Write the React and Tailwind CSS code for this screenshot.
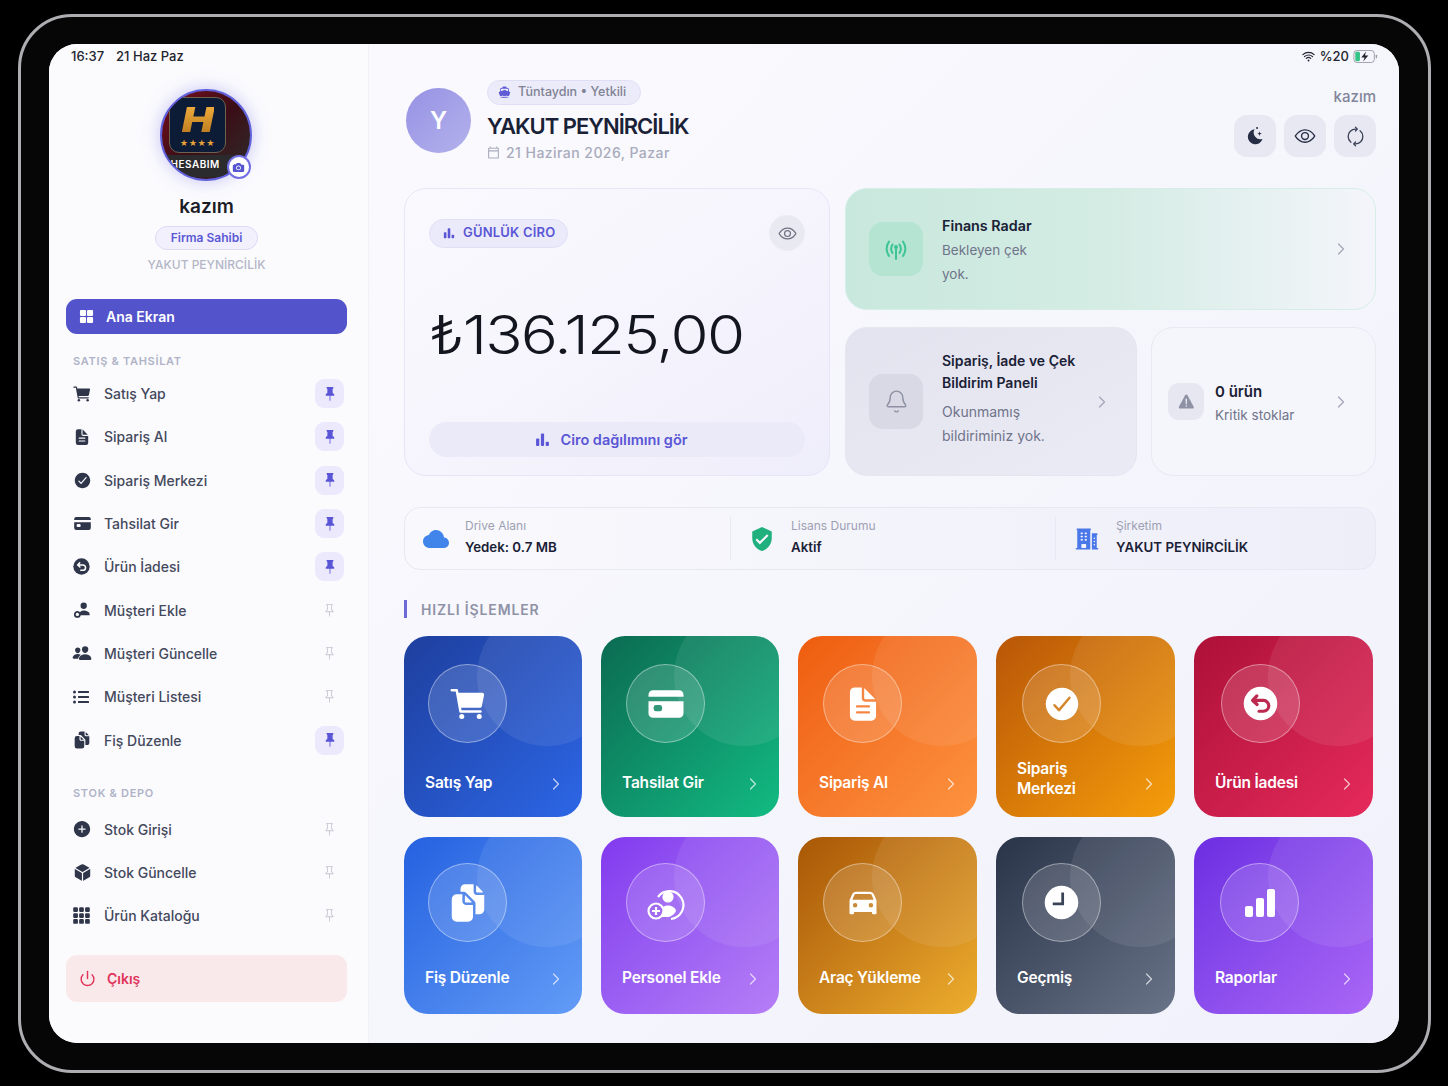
import React from "react";
import {
  IoCart, IoDocumentText, IoCheckmarkCircle, IoCard, IoPeople, IoDocuments,
  IoAddCircle, IoCube, IoGrid, IoSyncOutline, IoEyeOutline, IoBoat, IoCar, IoCamera, IoWarning, IoWifi, IoCloud,
} from "react-icons/io5";
import { BsPinFill, BsPin, BsGrid3X3GapFill } from "react-icons/bs";
import { FaListUl } from "react-icons/fa";
import { MdVerifiedUser, MdOutlineCalendarToday } from "react-icons/md";
import { HiBuildingOffice2 } from "react-icons/hi2";
import { ChevronRight, Bell, Power } from "lucide-react";

function UndoCircle({ className, stroke }) {
  return (
    <svg viewBox="0 0 24 24" className={className}>
      <circle cx="12" cy="12" r="11.500" fill="currentColor" />
      <path d="M9.500 6.800 6.600 9.900l3.100 2.800M7 9.900h7a3.600 3.600 0 0 1 0 7.400h-3" fill="none" stroke={stroke} strokeWidth="2.200" strokeLinecap="round" strokeLinejoin="round" />
    </svg>
  );
}

function PersonKey({ className }) {
  return (
    <svg viewBox="0 0 24 24" className={className} fill="currentColor">
      <circle cx="13.500" cy="6" r="4" />
      <path d="M8 18v-1.500c0-2.800 2.600-4.500 5.500-4.500s7.500 1.700 7.500 4.500V18z" />
      <circle cx="5.500" cy="17" r="3.200" fill="none" stroke="currentColor" strokeWidth="2.200" />
    </svg>
  );
}

function PersonPlus({ className }) {
  return (
    <svg viewBox="0 0 40 40" className={className}>
      <path d="M12 14a14 14 0 1 1 13 22" fill="none" stroke="white" strokeWidth="2.200" />
      <circle cx="22" cy="14" r="5.600" fill="white" />
      <path d="M14 30c0-5 4-7.500 8-7.500s8 2.500 8 5.500c-2 4-6 6-9 6h-7z" fill="white" />
      <circle cx="10" cy="28" r="7.500" fill="#a26bf2" stroke="white" strokeWidth="2.200" />
      <path d="M10 24v8M6 28h8" stroke="white" strokeWidth="2.200" />
    </svg>
  );
}

function ClockFilled({ className }) {
  return (
    <svg viewBox="0 0 24 24" className={className}>
      <circle cx="12" cy="12" r="11.500" fill="white" />
      <path d="M12.800 5.200v7.800H6" fill="none" stroke="#3a4458" strokeWidth="1.900" />
    </svg>
  );
}

function MiniBars({ className }) {
  return (
    <svg viewBox="0 0 14 14" className={className} fill="currentColor">
      <rect x="1" y="6" width="3" height="7" rx="0.800" />
      <rect x="5.500" y="1.500" width="3" height="11.500" rx="0.800" />
      <rect x="10" y="9" width="3" height="4" rx="0.800" />
    </svg>
  );
}

function RisingBars({ className }) {
  return (
    <svg viewBox="0 0 32 32" className={className} fill="white">
      <rect x="1" y="19" width="8" height="11" rx="2" />
      <rect x="12" y="11" width="8" height="19" rx="2" />
      <rect x="23" y="2" width="8" height="28" rx="2" />
    </svg>
  );
}

function MoonSpark({ className }) {
  return (
    <svg viewBox="0 0 24 24" className={className} fill="currentColor">
      <path d="M11.500 4a9 9 0 1 0 9.500 11.500A8 8 0 0 1 11.500 4z" />
      <path d="M17.500 6.500l.7 2 2 .7-2 .7-.7 2-.7-2-2-.7 2-.7z" />
      <circle cx="14.500" cy="2.500" r="1.200" />
    </svg>
  );
}

function Radar({ className }) {
  return (
    <svg viewBox="0 0 24 24" className={className} fill="none" stroke="currentColor" strokeWidth="2" strokeLinecap="round">
      <path d="M5 4.500c-3 4.500-3 10 0 14.500M19 4.500c3 4.500 3 10 0 14.500M8.500 7.500c-1.800 2.800-1.800 5.700 0 8.500M15.500 7.500c1.800 2.800 1.800 5.700 0 8.500" />
      <circle cx="12" cy="10" r="2" fill="currentColor" stroke="none" />
      <path d="M12 11v11" />
    </svg>
  );
}

const salesRows = [
  { label: "Satış Yap", icon: <IoCart className="w-[20px] h-[20px] -ml-[1px]" />, pinned: true },
  { label: "Sipariş Al", icon: <IoDocumentText className="w-[18px] h-[18px]" />, pinned: true },
  { label: "Sipariş Merkezi", icon: <IoCheckmarkCircle className="w-[19px] h-[19px]" />, pinned: true },
  { label: "Tahsilat Gir", icon: <IoCard className="w-[19px] h-[19px]" />, pinned: true },
  { label: "Ürün İadesi", icon: <UndoCircle className="w-[17px] h-[17px]" stroke="white" />, pinned: true },
  { label: "Müşteri Ekle", icon: <PersonKey className="w-[19px] h-[19px]" />, pinned: false },
  { label: "Müşteri Güncelle", icon: <IoPeople className="w-[20px] h-[20px] -ml-[1px]" />, pinned: false },
  { label: "Müşteri Listesi", icon: <FaListUl className="w-[16px] h-[16px]" />, pinned: false },
  { label: "Fiş Düzenle", icon: <IoDocuments className="w-[18px] h-[18px]" />, pinned: true },
];

const stockRows = [
  { label: "Stok Girişi", icon: <IoAddCircle className="w-[20px] h-[20px] -ml-[1px]" />, pinned: false },
  { label: "Stok Güncelle", icon: <IoCube className="w-[19px] h-[19px]" />, pinned: false },
  { label: "Ürün Kataloğu", icon: <BsGrid3X3GapFill className="w-[19px] h-[19px] -ml-[1px]" />, pinned: false },
];

function NavRow({ row }) {
  return (
    <div className="flex h-[43.3px] items-center pl-[7px] pr-[3px]">
      <div className="flex w-[31px] justify-start text-[#30364a]">{row.icon}</div>
      <span className="flex-1 text-[14px] font-medium text-[#44495c]">{row.label}</span>
      {row.pinned ? (
        <div className="flex h-[29px] w-[29px] items-center justify-center rounded-[9px] bg-[#ebe9fb]">
          <BsPinFill className="h-[14px] w-[14px] text-[#5a55d6]" />
        </div>
      ) : (
        <div className="flex h-[29px] w-[29px] items-center justify-center">
          <BsPin className="h-[13px] w-[13px] text-[#c2c4d0]" />
        </div>
      )}
    </div>
  );
}

function Avatar() {
  return (
    <div className="relative h-[92px] w-[92px] -translate-x-[1px] rounded-full border-[2px] border-[#6161dc] bg-gradient-to-br from-[#7d0a1c] via-[#3a0d16] to-[#2b2b2d] shadow-[0_0_18px_rgba(98,92,220,0.35)]">
      <div className="flex h-full w-full flex-col items-center overflow-hidden rounded-full">
        <div className="mt-[6px] flex h-[56px] w-[57px] -translate-x-[8px] flex-col items-center justify-center rounded-[10px] border border-[#6d6250] bg-[#0d1c36]">
          <span className="h-[34px] scale-x-[1.25] bg-gradient-to-b from-[#f3b23f] to-[#b9761c] bg-clip-text text-[34px] font-black italic leading-[34px] text-transparent">H</span>
          <span className="mt-[2px] h-[9px] text-[8px] leading-[9px] tracking-[0.5px] text-[#e7a23a]">★★★★</span>
        </div>
        <div className="mt-[2px] h-[22px] w-full bg-[#2b2b2d] pl-[9px] pt-[1px] text-left text-[10px] font-semibold leading-[16px] tracking-[0.5px] text-white">HESABIM</div>
      </div>
      <div className="absolute bottom-0 right-[-1px] flex h-[24px] w-[24px] items-center justify-center rounded-full border-[2px] border-[#7470e4] bg-white">
        <IoCamera className="h-[13px] w-[13px] text-[#5555d0]" />
      </div>
    </div>
  );
}

function Sidebar() {
  return (
    <aside className="flex h-full w-[320px] shrink-0 flex-col border-r border-[#f1f1f7] bg-[#fbfbfe] pl-[17px] pr-[21px] pt-[45px]">
      <div className="flex flex-col items-center">
        <Avatar />
        <div className="mt-[14px] h-[24px] text-[19px] font-semibold leading-[24px] text-[#1b1d26]">kazım</div>
        <div className="mt-[7px] flex h-[24px] w-[103px] items-center justify-center rounded-full border border-[#dcdaf6] bg-[#f1f0fc] text-[12px] font-semibold text-[#5c58d6]">Firma Sahibi</div>
        <div className="mt-[7px] h-[16px] text-[12px] font-medium leading-[16px] text-[#b3b6c6]">YAKUT PEYNİRCİLİK</div>
      </div>
      <div className="mt-[26px] flex h-[35px] items-center rounded-[11px] bg-[#5353cc] pl-[13px]">
        <IoGrid className="h-[15px] w-[15px] text-white" />
        <span className="ml-[12px] text-[14px] font-semibold text-white">Ana Ekran</span>
      </div>
      <div className="mt-[20px] h-[14px] pl-[7px] text-[11px] font-semibold leading-[14px] tracking-[0.7px] text-[#b0b3c7]">SATIŞ &amp; TAHSİLAT</div>
      <div className="mt-[4px]">{salesRows.map((r) => <NavRow key={r.label} row={r} />)}</div>
      <div className="mt-[24px] h-[14px] pl-[7px] text-[11px] font-semibold leading-[14px] tracking-[0.7px] text-[#b0b3c7]">STOK &amp; DEPO</div>
      <div className="mt-[8px]">{stockRows.map((r) => <NavRow key={r.label} row={r} />)}</div>
      <div className="mt-[17px] flex h-[47px] items-center rounded-[11px] bg-[#fae9ea] pl-[13px]">
        <Power className="h-[17px] w-[17px] text-[#e0345a]" strokeWidth={2} />
        <span className="ml-[11px] text-[14px] font-semibold text-[#e0345a]">Çıkış</span>
      </div>
    </aside>
  );
}

function Header() {
  return (
    <div className="flex h-[108px] items-start justify-between">
      <div className="flex pl-[2px]">
        <div className="mt-[8px] flex h-[65px] w-[65px] items-center justify-center rounded-full bg-gradient-to-br from-[#9692e4] to-[#b4b1ec] text-[24px] font-semibold text-white">Y</div>
        <div className="ml-[16px] flex flex-col items-start">
          <div className="flex h-[25px] w-[154px] items-center rounded-full border border-[#e0def5] bg-[#ecebfa] pl-[10px]">
            <IoBoat className="h-[13px] w-[13px] text-[#5f5bd5]" />
            <span className="ml-[7px] text-[12.500px] font-medium text-[#7f8293]">Tüntaydın • Yetkili</span>
          </div>
          <div className="mt-[6px] h-[30px] text-[22px] font-semibold leading-[30px] tracking-[-1px] text-[#1a2136]">YAKUT PEYNİRCİLİK</div>
          <div className="mt-[1px] flex items-center text-[#a8abbb]">
            <MdOutlineCalendarToday className="h-[13px] w-[13px]" />
            <span className="ml-[6px] text-[14px] font-medium tracking-[0.45px]">21 Haziran 2026, Pazar</span>
          </div>
        </div>
      </div>
      <div className="flex flex-col items-end">
        <div className="mt-[7px] h-[20px] text-[15px] font-medium leading-[20px] text-[#81859a]">kazım</div>
        <div className="mt-[8px] flex gap-[8px]">
          <div className="flex h-[42px] w-[42px] items-center justify-center rounded-[13px] bg-[#e7e8f2]"><MoonSpark className="h-[20px] w-[20px] text-[#262d45]" /></div>
          <div className="flex h-[42px] w-[42px] items-center justify-center rounded-[13px] bg-[#e7e8f2]"><IoEyeOutline className="h-[22px] w-[22px] text-[#262d45]" /></div>
          <div className="flex h-[42px] w-[42px] items-center justify-center rounded-[13px] bg-[#e7e8f2]"><IoSyncOutline className="h-[21px] w-[21px] rotate-90 text-[#3a4056]" /></div>
        </div>
      </div>
    </div>
  );
}

function RevenueCard() {
  return (
    <div className="flex h-[288px] flex-col rounded-[22px] border border-[#e7e5f8] bg-gradient-to-br from-[#f9f9fe] via-[#f6f5fd] to-[#eeedfa] px-[24px] pt-[26px]">
      <div className="flex items-center justify-between">
        <div className="flex h-[29px] w-[139px] items-center rounded-full border border-[#e1dff6] bg-[#ebeafa] pl-[13px]">
          <MiniBars className="h-[12px] w-[12px] text-[#5a56d5]" />
          <span className="ml-[8px] text-[13px] font-semibold tracking-[0.2px] text-[#5a56d5]">GÜNLÜK CİRO</span>
        </div>
        <div className="flex h-[36px] w-[36px] items-center justify-center rounded-full border border-[#ececf4] bg-[#e9e9f1]">
          <IoEyeOutline className="h-[19px] w-[19px] text-[#6d7180]" />
        </div>
      </div>
      <div className="mt-[51px] h-[66px] origin-left scale-x-[1.165] text-[53px] font-light leading-[66px] tracking-[-1.500px] text-[#14161f]">₺136.125,00</div>
      <div className="mt-[54px] flex h-[35px] items-center justify-center rounded-full bg-[#ebeaf9] pr-[11px]">
        <MiniBars className="h-[15px] w-[15px] text-[#5a56d5]" />
        <span className="ml-[10px] text-[14.500px] font-semibold text-[#5a56d5]">Ciro dağılımını gör</span>
      </div>
    </div>
  );
}

function StatusCards() {
  return (
    <div className="flex flex-col gap-[17px]">
      <div className="flex h-[122px] items-center rounded-[22px] border border-[#d6eee5] bg-gradient-to-r from-[#c9e8dd] via-[#d4ece4] to-[#f4f5fb] pl-[23px] pr-[24px]">
        <div className="flex h-[54px] w-[54px] items-center justify-center rounded-[14px] bg-[#b5e5d2]">
          <Radar className="h-[24px] w-[24px] text-[#3cc493]" />
        </div>
        <div className="ml-[19px] flex-1 pt-[2px]">
          <div className="text-[14.300px] font-semibold leading-[24px] text-[#1a2136]">Finans Radar</div>
          <div className="w-[100px] text-[13.500px] leading-[24px] text-[#70748a]">Bekleyen çek yok.</div>
        </div>
        <ChevronRight className="h-[20px] w-[20px] text-[#a3a7b8]" strokeWidth={1.500} />
      </div>
      <div className="grid grid-cols-[292px_225px] gap-x-[14px]">
        <div className="flex h-[149px] items-center rounded-[22px] border border-[#e5e6f0] bg-gradient-to-br from-[#e2e3ee] to-[#ebebf5] pl-[23px] pr-[24px]">
          <div className="flex h-[55px] w-[54px] shrink-0 items-center justify-center rounded-[14px] bg-[#d8d9e5]">
            <Bell className="h-[25px] w-[25px] text-[#8c90a3]" strokeWidth={1.300} />
          </div>
          <div className="ml-[19px] flex-1 pb-[5px] text-[14px]">
            <div className="font-semibold leading-[22px] text-[#1a2136]">Sipariş, İade ve Çek<br />Bildirim Paneli</div>
            <div className="mt-[6px] w-[120px] leading-[24px] text-[#70748a]">Okunmamış bildiriminiz yok.</div>
          </div>
          <ChevronRight className="h-[20px] w-[20px] shrink-0 text-[#a3a7b8]" strokeWidth={1.500} />
        </div>
        <div className="flex h-[149px] items-center rounded-[22px] border border-[#e9e9f4] bg-[#f5f5fc] pl-[16px] pr-[24px]">
          <div className="flex h-[37px] w-[36px] shrink-0 items-center justify-center rounded-[11px] bg-[#e6e7f0]">
            <IoWarning className="h-[19px] w-[19px] text-[#8d91a3]" />
          </div>
          <div className="ml-[11px] flex-1 pt-[3px]">
            <div className="text-[15px] font-semibold leading-[24px] text-[#1a2136]">0 ürün</div>
            <div className="-mt-[1px] text-[13.500px] leading-[24px] text-[#70748a]">Kritik stoklar</div>
          </div>
          <ChevronRight className="h-[20px] w-[20px] text-[#a3a7b8]" strokeWidth={1.500} />
        </div>
      </div>
    </div>
  );
}

function InfoCell({ icon, label, value, width }) {
  return (
    <div className={`flex h-[43px] items-center pl-[18px] ${width}`}>
      <div className="flex w-[42px] shrink-0 justify-start">{icon}</div>
      <div className="pb-[3px]">
        <div className="text-[12px] leading-[16px] text-[#9da0b2]">{label}</div>
        <div className="mt-[4px] text-[13.300px] font-semibold leading-[18px] text-[#1a2136]">{value}</div>
      </div>
    </div>
  );
}

function InfoStrip() {
  return (
    <div className="mt-[31px] flex h-[63px] items-center rounded-[16px] border border-[#e8e8f3] bg-gradient-to-r from-[#f9f9fd] to-[#eeeef9]">
      <InfoCell width="w-[326px] border-r border-[#e9e9f3]" icon={<IoCloud className="h-[26px] w-[26px] text-[#4285ea]" />} label="Drive Alanı" value="Yedek: 0.7 MB" />
      <InfoCell width="w-[325px] border-r border-[#e9e9f3]" icon={<MdVerifiedUser className="h-[26px] w-[26px] text-[#1fb07d]" />} label="Lisans Durumu" value="Aktif" />
      <InfoCell width="flex-1" icon={<HiBuildingOffice2 className="h-[26px] w-[26px] text-[#4a78e8]" />} label="Şirketim" value="YAKUT PEYNİRCİLİK" />
    </div>
  );
}

const tiles = [
  { label: "Satış Yap", ml: "ml-[24px]", bg: "from-[#1e3f9e] to-[#2c66e6]", icon: <IoCart className="h-[40px] w-[40px] text-white" /> },
  { label: "Tahsilat Gir", ml: "ml-[25px]", bg: "from-[#0b6b52] to-[#12bb82]", icon: <IoCard className="h-[40px] w-[40px] text-white" /> },
  { label: "Sipariş Al", ml: "ml-[25px]", bg: "from-[#ee5c0c] to-[#fd933f]", icon: <IoDocumentText className="h-[38px] w-[38px] text-white" /> },
  { label: "Sipariş\nMerkezi", ml: "ml-[26px]", bg: "from-[#b85607] to-[#f59e0b]", icon: <IoCheckmarkCircle className="h-[40px] w-[40px] text-white" />, two: true },
  { label: "Ürün İadesi", ml: "ml-[27px]", bg: "from-[#ad1038] to-[#e62a5b]", icon: <UndoCircle className="h-[35px] w-[35px] text-white" stroke="#bd2a50" /> },
  { label: "Fiş Düzenle", ml: "ml-[24px]", bg: "from-[#2560e0] to-[#639cf6]", icon: <IoDocuments className="h-[40px] w-[40px] text-white" /> },
  { label: "Personel Ekle", ml: "ml-[25px]", bg: "from-[#8238ee] to-[#b67ef6]", icon: <PersonPlus className="h-[40px] w-[40px]" /> },
  { label: "Araç Yükleme", ml: "ml-[25px]", bg: "from-[#a85605] to-[#edae2e]", icon: <IoCar className="h-[36px] w-[36px] text-white" /> },
  { label: "Geçmiş", ml: "ml-[26px]", bg: "from-[#2a3449] to-[#6a7489]", icon: <ClockFilled className="h-[35px] w-[35px]" /> },
  { label: "Raporlar", ml: "ml-[26px]", bg: "from-[#6d2ce2] to-[#ab66f6]", icon: <RisingBars className="h-[32px] w-[32px]" /> },
];

function Tile({ tile, row }) {
  return (
    <div className={`relative flex flex-col justify-between overflow-hidden rounded-[24px] bg-gradient-to-br ${tile.bg} ${row === 0 ? "pt-[28px]" : "pt-[26px]"}`}>
      <div className="absolute right-[-35px] top-[-30px] h-[140px] w-[140px] rounded-full bg-white/[0.08]" />
      <div className={`relative flex h-[79px] w-[79px] items-center justify-center rounded-full border border-white/40 bg-white/15 ${tile.ml}`}>
        {tile.icon}
      </div>
      <div className={`relative flex items-end justify-between pl-[21px] pr-[16px] ${tile.two ? "pb-[18px]" : row === 0 ? "pb-[24px]" : "pb-[26px]"}`}>
        <span className="whitespace-pre-line text-[15.500px] font-semibold leading-[20px] tracking-[-0.2px] text-white">{tile.label}</span>
        <ChevronRight className={`h-[20px] w-[20px] shrink-0 text-white/70 ${tile.two ? "mb-[5px]" : "mb-[-1px]"}`} strokeWidth={1.500} />
      </div>
    </div>
  );
}

function QuickActions() {
  return (
    <div>
      <div className="mt-[30px] flex h-[18px] items-center border-l-[3px] border-[#6d6ad8] pl-[14px] text-[14px] font-semibold tracking-[0.85px] text-[#8f92a6]">HIZLI İŞLEMLER</div>
      <div className="mt-[18px] grid grid-cols-[178px_178px_179px_179px_179px] grid-rows-[181px_177px] gap-x-[19px] gap-y-[20px]">
        {tiles.map((t, i) => <Tile key={t.label} tile={t} row={i < 5 ? 0 : 1} />)}
      </div>
    </div>
  );
}

function StatusBar() {
  return (
    <div className="absolute inset-x-0 top-0 z-10 flex h-[25px] items-center justify-between pl-[22px] pr-[21px] text-[13px] font-medium text-[#23252e]">
      <div className="flex gap-[12px]">
        <span>16:37</span>
        <span>21 Haz Paz</span>
      </div>
      <div className="flex items-center gap-[4px]">
        <IoWifi className="h-[15px] w-[15px]" />
        <span>%20</span>
        <svg viewBox="0 0 26 14" className="h-[13px] w-[25px]">
          <rect x="0.500" y="0.500" width="22" height="13" rx="3.500" fill="none" stroke="#9a9ca6" />
          <rect x="2" y="2" width="5" height="10" rx="1.500" fill="#33c486" />
          <path d="M13.500 1.500 8.500 8h3.500l-1.500 4.500 5.500-6.500h-3.500z" fill="#23252e" />
          <rect x="24" y="5" width="1.500" height="4" rx="0.700" fill="#9a9ca6" />
        </svg>
      </div>
    </div>
  );
}

export default function App() {
  return (
    <div className="h-[1086px] w-[1448px] overflow-hidden bg-black pl-[18px] pt-[14px] font-[family-name:Inter,sans-serif]">
      <div className="h-[1059px] w-[1413px] rounded-[54px] border-[3px] border-[#aeaeb2] bg-[#060607] pl-[28px] pt-[27px]">
        <div className="relative flex h-[999px] w-[1350px] overflow-hidden rounded-[28px] bg-[#f4f4fc]">
          <StatusBar />
          <Sidebar />
          <main className="h-full flex-1 bg-gradient-to-br from-[#fafafe] to-[#f1f1fb] pl-[35px] pr-[23px] pt-[36px]">
            <Header />
            <div className="grid grid-cols-[426px_531px] gap-x-[15px]">
              <RevenueCard />
              <StatusCards />
            </div>
            <InfoStrip />
            <QuickActions />
          </main>
        </div>
      </div>
    </div>
  );
}
